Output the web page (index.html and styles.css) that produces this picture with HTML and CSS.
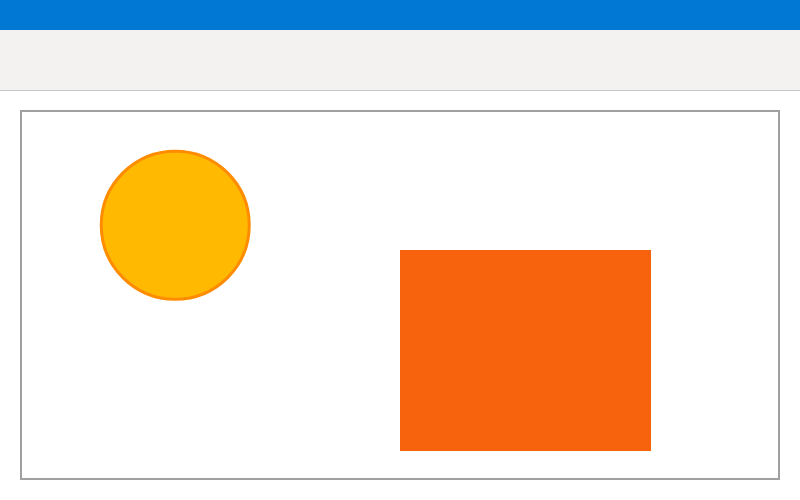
FILE: index.html
```html
<!DOCTYPE html>
<html lang="en">
<head>
<meta charset="utf-8">
<title>Canvas</title>
<link rel="stylesheet" href="styles.css">
</head>
<body>
  <header class="titlebar"></header>
  <div class="toolbar"></div>
  <main class="workspace">
    <div class="canvas">
      <svg class="drawing" width="756" height="366" viewBox="0 0 756 366" xmlns="http://www.w3.org/2000/svg">
        <circle cx="153.25" cy="113.25" r="74" fill="#ffb900" stroke="#ff8c00" stroke-width="3"/>
        <rect x="378" y="138" width="251" height="201" fill="#f7630c"/>
      </svg>
    </div>
  </main>
</body>
</html>
```
FILE: styles.css
```css
* { box-sizing: border-box; }

html, body {
  margin: 0;
  width: 800px;
  height: 500px;
  background: #ffffff;
  font-family: "Segoe UI", "Open Sans", sans-serif;
  overflow: hidden;
}

.titlebar {
  height: 30px;
  background: #0078d4;
}

.toolbar {
  height: 61px;
  background: #f3f2f1;
  border-bottom: 1px solid #c8c6c4;
}

.workspace {
  padding: 19px 20px 20px;
}

.canvas {
  height: 370px;
  border: 2px solid #a0a0a0;
  background: #ffffff;
}

.drawing {
  display: block;
}
```
